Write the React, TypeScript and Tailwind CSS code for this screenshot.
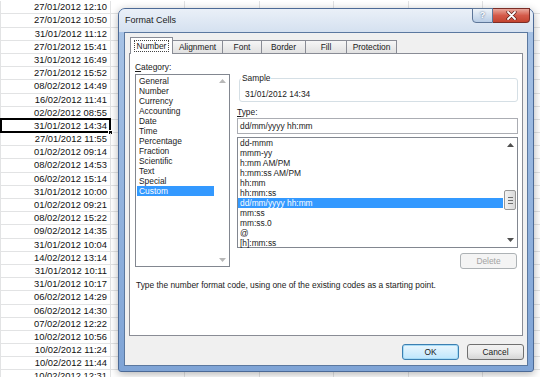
import React from "react";

const dates = [
  "27/01/2012 12:10",
  "27/01/2012 10:50",
  "31/01/2012 11:12",
  "27/01/2012 15:41",
  "31/01/2012 16:49",
  "27/01/2012 15:52",
  "08/02/2012 14:49",
  "16/02/2012 11:41",
  "02/02/2012 08:55",
  "31/01/2012 14:34",
  "27/01/2012 11:55",
  "01/02/2012 09:14",
  "08/02/2012 14:53",
  "06/02/2012 15:14",
  "31/01/2012 10:00",
  "01/02/2012 09:21",
  "08/02/2012 15:22",
  "09/02/2012 14:35",
  "31/01/2012 10:04",
  "14/02/2012 13:14",
  "31/01/2012 10:11",
  "31/01/2012 10:17",
  "06/02/2012 14:29",
  "06/02/2012 14:30",
  "07/02/2012 12:22",
  "10/02/2012 10:56",
  "10/02/2012 11:24",
  "10/02/2012 11:44",
  "10/02/2012 12:31",
];

const categories = [
  "General",
  "Number",
  "Currency",
  "Accounting",
  "Date",
  "Time",
  "Percentage",
  "Fraction",
  "Scientific",
  "Text",
  "Special",
  "Custom",
];

const types = [
  "dd-mmm",
  "mmm-yy",
  "h:mm AM/PM",
  "h:mm:ss AM/PM",
  "hh:mm",
  "hh:mm:ss",
  "dd/mm/yyyy hh:mm",
  "mm:ss",
  "mm:ss.0",
  "@",
  "[h]:mm:ss",
];

const tabs = [
  { label: "Alignment", w: "w-[50px]" },
  { label: "Font", w: "w-[39px]" },
  { label: "Border", w: "w-[44px]" },
  { label: "Fill", w: "w-[41px]" },
  { label: "Protection", w: "w-[50px]" },
];

const Arrow = ({ up, color }: { up?: boolean; color: string }) => (
  <svg width="7" height="4" viewBox="0 0 7 4">
    <path d={up ? "M0 4 L3.5 0 L7 4 Z" : "M0 0 L3.5 4 L7 0 Z"} fill={color} />
  </svg>
);

const Sheet = () => (
  <div className="flex flex-col pt-[1.2px]">
    {dates.map((d, i) => (
      <div key={i} className="flex h-[13.2px] shrink-0 border-b border-[#e2e3e4]">
        <div className="relative w-[111px] shrink-0 border-l border-r border-[#e2e3e4] pr-[3px] text-right text-[9.4px] leading-[12.5px] text-[#111]">
          {d}
          {i === 9 && (
            <>
              <span className="absolute -left-[1px] -top-[1.5px] -right-[1px] -bottom-[1px] border-2 border-black" />
              <span className="absolute -right-[3px] -bottom-[3px] h-[5px] w-[5px] border border-white bg-black" />
            </>
          )}
        </div>
        {[0, 1, 2, 3, 4, 5].map((c) => (
          <div key={c} className="w-[74.4px] shrink-0 border-r border-[#e2e3e4]" />
        ))}
      </div>
    ))}
  </div>
);

const Dialog = () => (
  <div className="absolute left-[118px] top-[8px] flex h-[364px] w-[416px] flex-col rounded-t-[7px] rounded-b-[3px] border border-[#4c6a96] bg-gradient-to-b from-[#a9c4e6] to-[#7fa4d6] shadow-[0_2px_8px_rgba(0,0,0,0.3)]">
    {/* title bar */}
    <div className="flex h-[23px] shrink-0 items-center rounded-t-[6px] bg-gradient-to-b from-[#eaf0f8] to-[#d5e1f0] pl-[6px] text-[9px] text-[#1b1b1b]">
      Format Cells
    </div>
    <div className="absolute -top-[1px] right-[3px] flex h-[15px]">
      <div className="flex w-[21px] items-center justify-center rounded-bl-[4px] border border-[#5d7699] bg-gradient-to-b from-[#eef3f9] via-[#d3e0ef] to-[#b9cde6] text-[9px] font-bold text-white [text-shadow:0_0_2px_#2b4a76]">
        ?
      </div>
      <div className="flex w-[37px] items-center justify-center rounded-br-[4px] border border-l-0 border-[#7a2d27] bg-gradient-to-b from-[#e8a79c] via-[#d45a4a] to-[#c3432f]">
        <svg width="11" height="9" viewBox="0 0 11 9">
          <path d="M2 1 L9 8 M9 1 L2 8" stroke="#5a1d18" strokeWidth="3.2" strokeLinecap="round" />
          <path d="M2 1 L9 8 M9 1 L2 8" stroke="#ffffff" strokeWidth="1.8" strokeLinecap="round" />
        </svg>
      </div>
    </div>

    {/* client area */}
    <div className="flex flex-1 px-[5px] pb-[5px]">
      <div className="flex flex-1 flex-col border border-[#5b789f] bg-[#f0f0f0] text-[8.4px] text-[#1a1a1a]">
        {/* tabs */}
        <div className="flex items-end pl-[5px] pt-[4px]">
          <div className="relative z-10 -mb-px flex h-[17px] w-[43px] items-center justify-center border border-b-0 border-[#898c95] bg-white">
            <span className="border border-dotted border-[#444] px-[2px] leading-[10px]">Number</span>
          </div>
          {tabs.map((t) => (
            <div
              key={t.label}
              className={`flex h-[13px] ${t.w} items-center justify-center border-t border-r border-[#898c95] bg-gradient-to-b from-[#f6f6f6] to-[#e1e1e1] leading-[10px]`}
            >
              {t.label}
            </div>
          ))}
        </div>

        {/* panel */}
        <div className="mx-[4px] flex h-[283px] flex-col border border-[#898c95] bg-white">
          <div className="flex gap-[7px] pl-[5px] pr-[4px]">
            {/* category */}
            <div className="flex w-[95px] flex-col pt-[8px]">
              <div className="leading-[10px]">
                <span className="underline">C</span>ategory:
              </div>
              <div className="mt-[2px] flex h-[193px] border border-[#828790] bg-white">
                <div className="flex flex-1 flex-col px-[1px] pt-[1px]">
                  {categories.map((c) => (
                    <div
                      key={c}
                      className={`h-[10px] pl-[2px] leading-[10px] ${c === "Custom" ? "bg-[#3399ff] text-white" : ""}`}
                    >
                      {c}
                    </div>
                  ))}
                </div>
                <div className="flex w-[14px] flex-col justify-between py-[4px]">
                  <div className="flex justify-center">
                    <Arrow up color="#b8b8b8" />
                  </div>
                  <div className="flex justify-center">
                    <Arrow color="#b8b8b8" />
                  </div>
                </div>
              </div>
            </div>

            {/* right side */}
            <div className="flex flex-1 flex-col pt-[19px]">
              <fieldset className="ml-[2px] rounded-[3px] border border-[#d5dfe5]">
                <legend className="ml-[1px] px-[1px] leading-[10px]">Sample</legend>
                <div className="pl-[5px] pt-[6px] pb-[2px] leading-[10px]">31/01/2012 14:34</div>
              </fieldset>
              <div className="mt-[5px] leading-[10px]">
                <span className="underline">T</span>ype:
              </div>
              <div className="mt-[1px] flex h-[16px] items-center border border-[#abadb3] bg-white pl-[2px]">
                dd/mm/yyyy hh:mm
              </div>
              <div className="mt-[3px] flex h-[111px] border border-[#828790] bg-white">
                <div className="flex flex-1 flex-col">
                  {types.map((t) => (
                    <div
                      key={t}
                      className={`h-[10px] pl-[2px] leading-[10px] ${t === "dd/mm/yyyy hh:mm" ? "bg-[#3399ff] text-white" : ""}`}
                    >
                      {t}
                    </div>
                  ))}
                </div>
                <div className="flex w-[14px] flex-col">
                  <div className="flex h-[14px] items-center justify-center">
                    <Arrow up color="#505050" />
                  </div>
                  <div className="mx-[1px] mt-[38px] flex h-[20px] flex-col items-center justify-center gap-[2px] rounded-[2px] border border-[#979797] bg-gradient-to-r from-[#f3f3f3] to-[#d9d9d9]">
                    <div className="h-px w-[5px] bg-[#6f6f6f]" />
                    <div className="h-px w-[5px] bg-[#6f6f6f]" />
                    <div className="h-px w-[5px] bg-[#6f6f6f]" />
                  </div>
                  <div className="flex-1" />
                  <div className="flex h-[14px] items-center justify-center">
                    <Arrow color="#505050" />
                  </div>
                </div>
              </div>
              <div className="mr-[1px] mt-[5px] flex h-[16px] w-[57px] items-center justify-center self-end rounded-[3px] border border-[#adb2b5] bg-[#f4f4f4] text-[#a3a3a3]">
                Delete
              </div>
            </div>
          </div>
          <div className="mt-[11px] pl-[6px] leading-[10px]">
            Type the number format code, using one of the existing codes as a starting point.
          </div>
        </div>

        {/* buttons */}
        <div className="mt-[8px] flex justify-end gap-[8px] pr-[3px]">
          <div className="flex h-[16px] w-[57px] items-center justify-center rounded-[3px] border border-[#3c7fb1] bg-gradient-to-b from-[#eaf6fd] to-[#bee6fd] shadow-[inset_0_0_0_1px_#a6dbf6]">
            OK
          </div>
          <div className="flex h-[16px] w-[57px] items-center justify-center rounded-[3px] border border-[#707070] bg-gradient-to-b from-[#f2f2f2] via-[#ebebeb] to-[#d6d6d6]">
            Cancel
          </div>
        </div>
      </div>
    </div>
  </div>
);

const App = () => {
  return (
    <div className="relative h-[377px] w-[540px] overflow-hidden bg-white font-['Liberation_Sans',Arial,sans-serif]">
      <Sheet />
      <Dialog />
    </div>
  );
};

export default App;
